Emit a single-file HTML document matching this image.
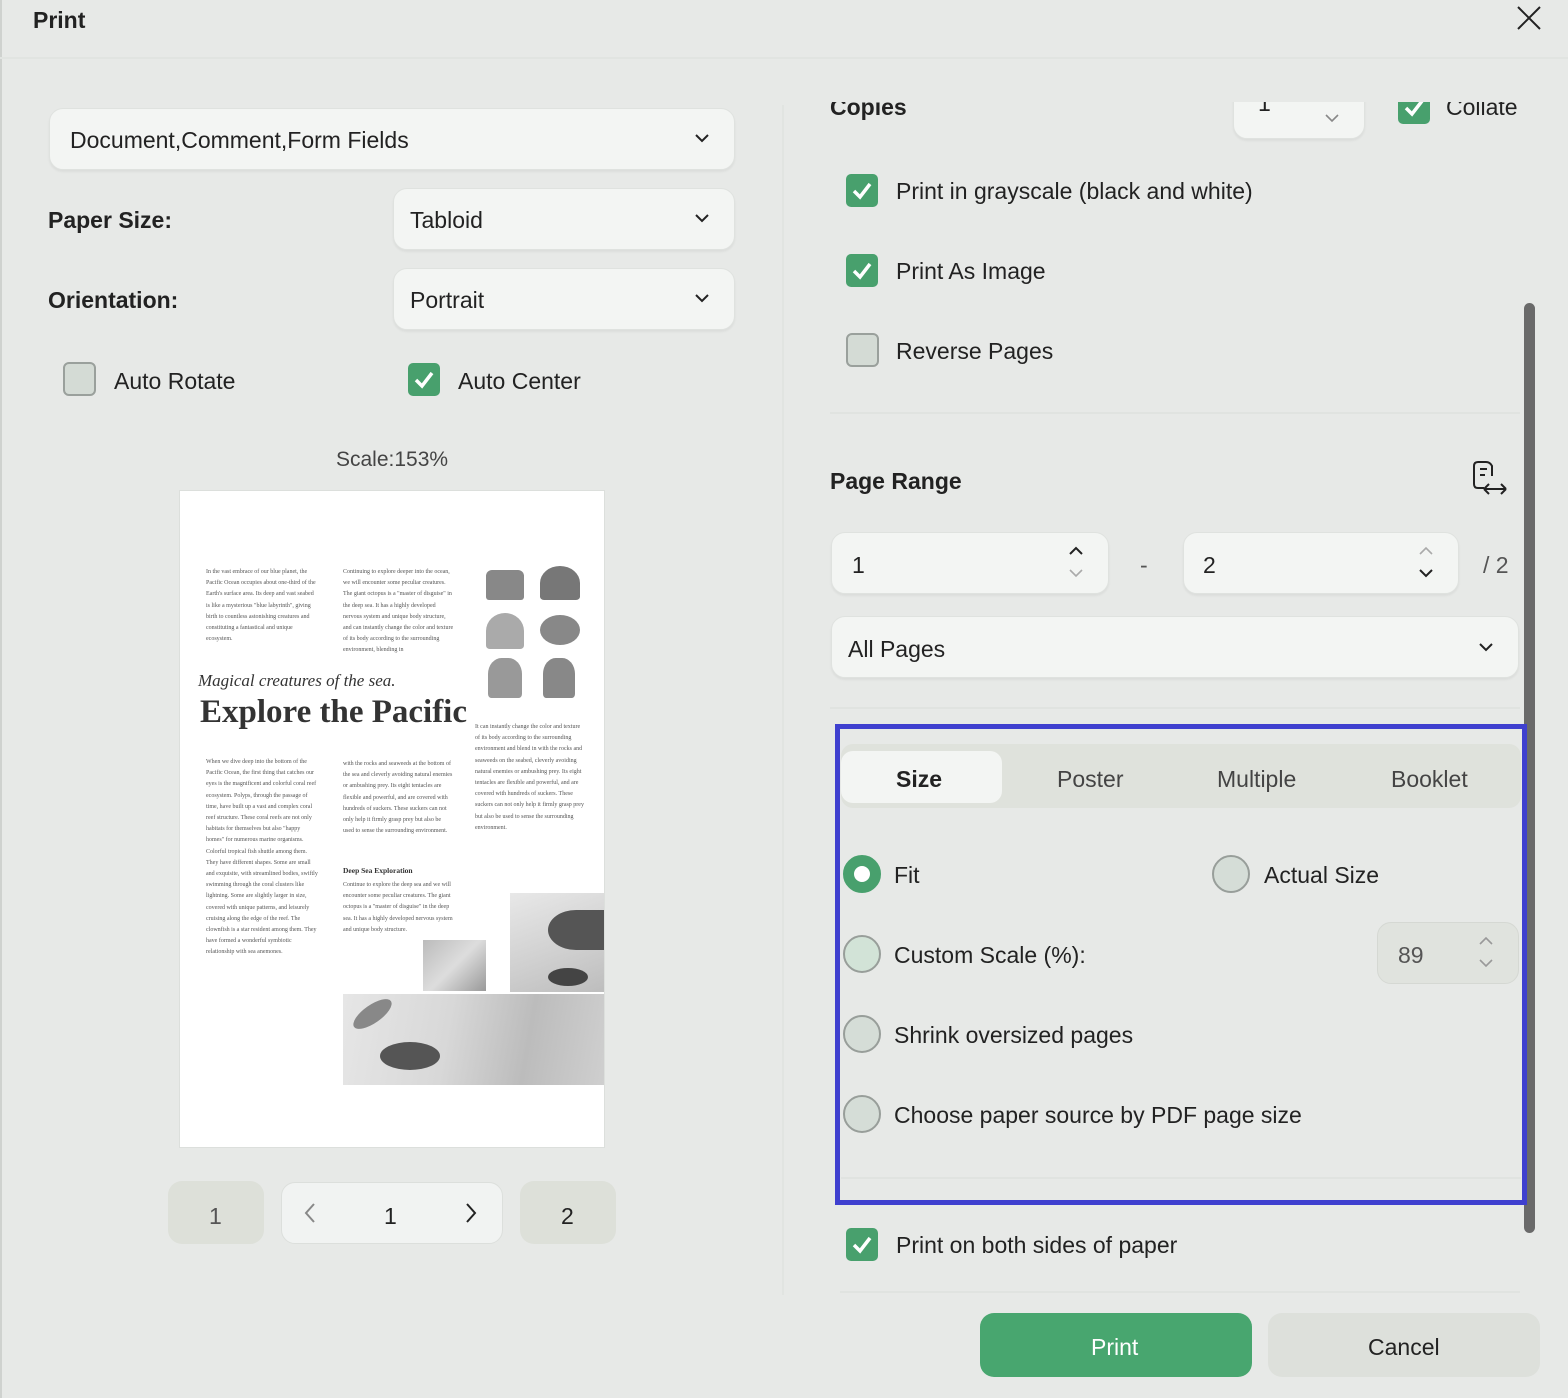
<!DOCTYPE html>
<html><head><meta charset="utf-8"><style>
*{box-sizing:border-box;margin:0;padding:0}
body{width:1568px;height:1398px;overflow:hidden;background:#e7e9e7;font-family:"Liberation Sans",sans-serif;color:#1e2420;position:relative}
.a{position:absolute}
.sel{position:absolute;background:#f3f5f3;border:1px solid #dfe2df;border-radius:14px;box-shadow:0 2px 2px rgba(0,0,0,.05)}
.t{position:absolute;font-size:23px;white-space:nowrap;color:#222;margin-top:1px}
.b{font-weight:bold}
.cb{position:absolute;width:32px;height:33px;border-radius:5px;background:#48a06d}
.cbo{position:absolute;width:33px;height:34px;border-radius:6px;background:#d4dbd5;border:2px solid #9aa09c}
.rd{position:absolute;width:38px;height:38px;border-radius:50%;background:#d5ddd7;border:2px solid #989e9a}
.pg{font-family:"Liberation Serif",serif;font-size:6px;line-height:11.2px;color:#555;position:absolute}
</style></head><body>
<div class="a" style="left:0;top:0;width:2px;height:1398px;background:#cfd2cf"></div>
<div class="t b" style="left:33px;top:6px;font-size:23px;">Print</div>
<svg class="a" style="left:1516px;top:5px" width="26" height="26"><path d="M2 2L24 24M24 2L2 24" stroke="#222" stroke-width="2"/></svg>
<div class="a" style="left:0;top:57px;width:1568px;height:2px;background:#e1e4e1"></div>
<div class="a" style="left:782px;top:105px;width:2px;height:1190px;background:#e1e4e1"></div>

<!-- left -->
<div class="sel" style="left:49px;top:108px;width:686px;height:62px"></div>
<div class="t" style="left:70px;top:126px;">Document,Comment,Form Fields</div>
<div class="sel" style="left:393px;top:188px;width:342px;height:62px"></div>
<div class="t" style="left:410px;top:206px;">Tabloid</div>
<div class="sel" style="left:393px;top:268px;width:342px;height:62px"></div>
<div class="t" style="left:410px;top:286px;">Portrait</div>
<svg class="a" style="left:694px;top:133px" width="16" height="10"><path d="M2 2L8 8L14 2" stroke="#222" stroke-width="2" fill="none"/></svg>
<svg class="a" style="left:694px;top:213px" width="16" height="10"><path d="M2 2L8 8L14 2" stroke="#222" stroke-width="2" fill="none"/></svg>
<svg class="a" style="left:694px;top:293px" width="16" height="10"><path d="M2 2L8 8L14 2" stroke="#222" stroke-width="2" fill="none"/></svg>
<div class="t b" style="left:48px;top:206px;">Paper Size:</div>
<div class="t b" style="left:48px;top:286px;">Orientation:</div>
<div class="cbo" style="left:63px;top:362px"></div>
<div class="t" style="left:114px;top:367px;">Auto Rotate</div>
<div class="cb" style="left:408px;top:363px"><svg width="32" height="33"><path d="M8 17L14 23L24 10" stroke="#fff" stroke-width="3.5" fill="none"/></svg></div>
<div class="t" style="left:458px;top:367px;">Auto Center</div>
<div class="t" style="left:336px;top:447px;font-size:21px;color:#444">Scale:153%</div>

<!-- page preview -->
<div class="a" style="left:179px;top:490px;width:426px;height:658px;background:#fff;border:1px solid #dcdfdc"></div>
<div class="pg" style="left:206px;top:567px;width:110px">In the vast embrace of our blue planet, the Pacific Ocean occupies about one-third of the Earth's surface area. Its deep and vast seabed is like a mysterious "blue labyrinth", giving birth to countless astonishing creatures and constituting a fantastical and unique ecosystem.</div>
<div class="pg" style="left:343px;top:567px;width:112px">Continuing to explore deeper into the ocean, we will encounter some peculiar creatures. The giant octopus is a "master of disguise" in the deep sea. It has a highly developed nervous system and unique body structure, and can instantly change the color and texture of its body according to the surrounding environment, blending in</div>
<div class="a" style="left:486px;top:570px;width:38px;height:30px;background:#888;border-radius:6px 6px 3px 3px"></div>
<div class="a" style="left:540px;top:566px;width:40px;height:34px;background:#777;border-radius:50% 50% 10% 10%"></div>
<div class="a" style="left:486px;top:613px;width:38px;height:36px;background:#aaa;border-radius:50% 50% 10% 10%"></div>
<div class="a" style="left:540px;top:615px;width:40px;height:30px;background:#888;border-radius:50%"></div>
<div class="a" style="left:488px;top:658px;width:34px;height:40px;background:#999;border-radius:40% 40% 10% 10%"></div>
<div class="a" style="left:543px;top:658px;width:32px;height:40px;background:#888;border-radius:40% 40% 10% 10%"></div>
<div class="a" style="left:198px;top:671px;font-family:'Liberation Serif',serif;font-style:italic;font-size:17px;color:#333">Magical creatures of the sea.</div>
<div class="a" style="left:200px;top:694px;font-family:'Liberation Serif',serif;font-weight:bold;font-size:33px;color:#333;white-space:nowrap">Explore the Pacific</div>
<div class="pg" style="left:206px;top:757px;width:112px">When we dive deep into the bottom of the Pacific Ocean, the first thing that catches our eyes is the magnificent and colorful coral reef ecosystem. Polyps, through the passage of time, have built up a vast and complex coral reef structure. These coral reefs are not only habitats for themselves but also "happy homes" for numerous marine organisms. Colorful tropical fish shuttle among them. They have different shapes. Some are small and exquisite, with streamlined bodies, swiftly swimming through the coral clusters like lightning. Some are slightly larger in size, covered with unique patterns, and leisurely cruising along the edge of the reef. The clownfish is a star resident among them. They have formed a wonderful symbiotic relationship with sea anemones.</div>
<div class="pg" style="left:343px;top:759px;width:110px">with the rocks and seaweeds at the bottom of the sea and cleverly avoiding natural enemies or ambushing prey. Its eight tentacles are flexible and powerful, and are covered with hundreds of suckers. These suckers can not only help it firmly grasp prey but also be used to sense the surrounding environment.</div>
<div class="pg" style="left:475px;top:722px;width:110px">It can instantly change the color and texture of its body according to the surrounding environment and blend in with the rocks and seaweeds on the seabed, cleverly avoiding natural enemies or ambushing prey. Its eight tentacles are flexible and powerful, and are covered with hundreds of suckers. These suckers can not only help it firmly grasp prey but also be used to sense the surrounding environment.</div>
<div class="a" style="left:343px;top:866px;font-family:'Liberation Serif',serif;font-weight:bold;font-size:7.5px;color:#333">Deep Sea Exploration</div>
<div class="pg" style="left:343px;top:880px;width:112px">Continue to explore the deep sea and we will encounter some peculiar creatures. The giant octopus is a "master of disguise" in the deep sea. It has a highly developed nervous system and unique body structure.</div>
<div class="a" style="left:423px;top:940px;width:63px;height:51px;background:linear-gradient(135deg,#bbb,#ddd 50%,#999)"></div>
<div class="a" style="left:510px;top:893px;width:94px;height:99px;background:linear-gradient(160deg,#e8e8e8,#cfcfcf 60%,#bdbdbd)"></div>
<div class="a" style="left:548px;top:910px;width:56px;height:40px;background:#555;border-radius:50% 0 0 50%"></div>
<div class="a" style="left:548px;top:968px;width:40px;height:18px;background:#444;border-radius:50%"></div>
<div class="a" style="left:343px;top:994px;width:261px;height:91px;background:linear-gradient(100deg,#e6e6e6,#d8d8d8 40%,#bcbcbc 70%,#cfcfcf)"></div>
<div class="a" style="left:380px;top:1042px;width:60px;height:28px;background:#555;border-radius:50%"></div>
<div class="a" style="left:350px;top:1005px;width:45px;height:18px;background:#888;border-radius:50%;transform:rotate(-35deg)"></div>

<!-- pager -->
<div class="a" style="left:168px;top:1181px;width:96px;height:63px;background:#dde0d9;border-radius:14px"></div>
<div class="t" style="left:209px;top:1202px;color:#555">1</div>
<div class="a" style="left:281px;top:1182px;width:222px;height:62px;background:#f1f3f2;border:1px solid #dcdfdc;border-radius:14px"></div>
<svg class="a" style="left:303px;top:1202px" width="14" height="22"><path d="M11 2L3 11L11 20" stroke="#888" stroke-width="2" fill="none"/></svg>
<div class="t" style="left:384px;top:1202px;">1</div>
<svg class="a" style="left:464px;top:1202px" width="14" height="22"><path d="M3 2L11 11L3 20" stroke="#222" stroke-width="2" fill="none"/></svg>
<div class="a" style="left:520px;top:1181px;width:96px;height:63px;background:#dde0d9;border-radius:14px"></div>
<div class="t" style="left:561px;top:1202px;">2</div>

<!-- right -->
<div class="a" style="left:800px;top:102px;width:720px;height:60px;overflow:hidden">
 <div class="t b" style="left:30px;top:-9px;">Copies</div>
 <div class="sel" style="left:433px;top:-20px;width:132px;height:57px"></div>
 <div class="t" style="left:458px;top:-13px;">1</div>
 <svg class="a" style="left:524px;top:11px" width="16" height="10"><path d="M2 2L8 8L14 2" stroke="#888" stroke-width="1.6" fill="none"/></svg>
 <div class="cb" style="left:598px;top:-11px"><svg width="32" height="33"><path d="M8 17L14 23L24 10" stroke="#fff" stroke-width="3.5" fill="none"/></svg></div>
 <div class="t" style="left:646px;top:-9px;">Collate</div>
</div>
<div class="cb" style="left:846px;top:174px"><svg width="32" height="33"><path d="M8 17L14 23L24 10" stroke="#fff" stroke-width="3.5" fill="none"/></svg></div>
<div class="t" style="left:896px;top:177px;">Print in grayscale (black and white)</div>
<div class="cb" style="left:846px;top:254px"><svg width="32" height="33"><path d="M8 17L14 23L24 10" stroke="#fff" stroke-width="3.5" fill="none"/></svg></div>
<div class="t" style="left:896px;top:257px;">Print As Image</div>
<div class="cbo" style="left:846px;top:333px"></div>
<div class="t" style="left:896px;top:337px;">Reverse Pages</div>
<div class="a" style="left:830px;top:412px;width:690px;height:2px;background:#e0e3e0"></div>
<div class="t b" style="left:830px;top:467px;">Page Range</div>
<svg class="a" style="left:1470px;top:460px" width="40" height="40"><path d="M14 28H8Q4 28 4 24V6Q4 2 8 2H16Q20 2 22 6V16" stroke="#222" stroke-width="2" fill="none"/><path d="M10 9H17M10 15H15" stroke="#222" stroke-width="2"/><path d="M14 29H36M14 29L19 24M14 29L19 34M36 29L31 24M36 29L31 34" stroke="#222" stroke-width="2" fill="none"/></svg>
<div class="sel" style="left:831px;top:532px;width:278px;height:62px"></div>
<div class="t" style="left:852px;top:551px;">1</div>
<svg class="a" style="left:1068px;top:546px" width="16" height="34"><path d="M2 8L8 2L14 8" stroke="#222" stroke-width="2" fill="none"/><path d="M2 24L8 30L14 24" stroke="#aaa" stroke-width="1.6" fill="none"/></svg>
<div class="t" style="left:1140px;top:551px;color:#555">-</div>
<div class="sel" style="left:1183px;top:532px;width:276px;height:62px"></div>
<div class="t" style="left:1203px;top:551px;">2</div>
<svg class="a" style="left:1418px;top:546px" width="16" height="34"><path d="M2 8L8 2L14 8" stroke="#aaa" stroke-width="1.6" fill="none"/><path d="M2 24L8 30L14 24" stroke="#222" stroke-width="2" fill="none"/></svg>
<div class="t" style="left:1483px;top:551px;color:#555">/ 2</div>
<div class="sel" style="left:831px;top:616px;width:688px;height:62px"></div>
<div class="t" style="left:848px;top:635px;">All Pages</div>
<svg class="a" style="left:1478px;top:642px" width="16" height="10"><path d="M2 2L8 8L14 2" stroke="#222" stroke-width="2" fill="none"/></svg>
<div class="a" style="left:830px;top:707px;width:690px;height:2px;background:#e0e3e0"></div>
<div class="a" style="left:1524px;top:303px;width:11px;height:930px;background:#6a6a6a;border-radius:6px"></div>

<!-- blue box -->
<div class="a" style="left:835px;top:724px;width:692px;height:481px;border:5px solid #3f40cf"></div>
<div class="a" style="left:841px;top:744px;width:680px;height:64px;background:#dfe2dc;border-radius:12px"></div>
<div class="a" style="left:841px;top:751px;width:161px;height:52px;background:#f3f5f3;border-radius:12px"></div>
<div class="t b" style="left:896px;top:765px;">Size</div>
<div class="t" style="left:1057px;top:765px;color:#444">Poster</div>
<div class="t" style="left:1217px;top:765px;color:#444">Multiple</div>
<div class="t" style="left:1391px;top:765px;color:#444">Booklet</div>
<div class="a" style="left:843px;top:855px;width:38px;height:38px;border-radius:50%;background:#fff;border:11px solid #48a06d"></div>
<div class="t" style="left:894px;top:861px;">Fit</div>
<div class="rd" style="left:1212px;top:855px"></div>
<div class="t" style="left:1264px;top:861px;">Actual Size</div>
<div class="rd" style="left:843px;top:935px;background:#d2e3d7"></div>
<div class="t" style="left:894px;top:941px;">Custom Scale (%):</div>
<div class="a" style="left:1377px;top:922px;width:142px;height:62px;background:#e0e3de;border:1px solid #d5d8d3;border-radius:14px"></div>
<div class="t" style="left:1398px;top:941px;color:#555">89</div>
<svg class="a" style="left:1478px;top:936px" width="16" height="34"><path d="M2 8L8 2L14 8" stroke="#999" stroke-width="1.6" fill="none"/><path d="M2 24L8 30L14 24" stroke="#999" stroke-width="1.6" fill="none"/></svg>
<div class="rd" style="left:843px;top:1015px"></div>
<div class="t" style="left:894px;top:1021px;">Shrink oversized pages</div>
<div class="rd" style="left:843px;top:1095px"></div>
<div class="t" style="left:894px;top:1101px;">Choose paper source by PDF page size</div>
<div class="a" style="left:841px;top:1177px;width:680px;height:2px;background:#e0e3e0"></div>

<div class="cb" style="left:846px;top:1228px"><svg width="32" height="33"><path d="M8 17L14 23L24 10" stroke="#fff" stroke-width="3.5" fill="none"/></svg></div>
<div class="t" style="left:896px;top:1231px;">Print on both sides of paper</div>
<div class="a" style="left:840px;top:1291px;width:680px;height:2px;background:#e0e3e0"></div>
<div class="a" style="left:980px;top:1313px;width:272px;height:64px;background:#48a66f;border-radius:14px"></div>
<div class="t" style="left:1091px;top:1333px;color:#fff">Print</div>
<div class="a" style="left:1268px;top:1313px;width:272px;height:64px;background:#dde0db;border-radius:14px"></div>
<div class="t" style="left:1368px;top:1333px;">Cancel</div>
</body></html>
